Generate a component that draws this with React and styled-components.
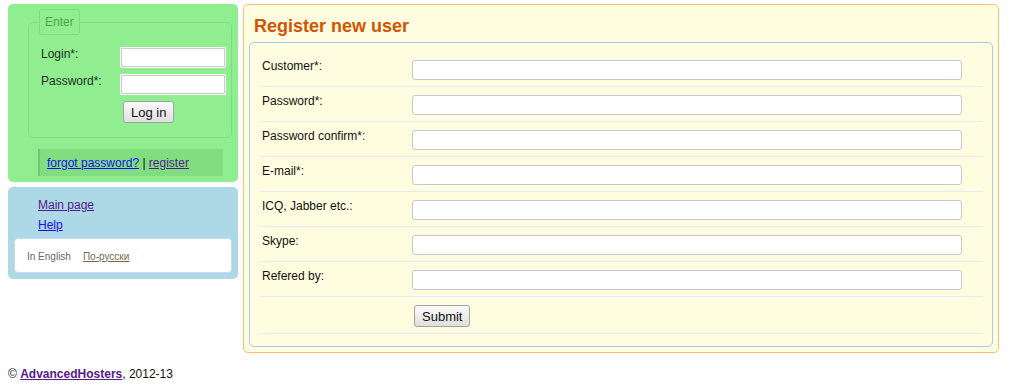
import React from 'react';
import styled, { createGlobalStyle } from 'styled-components';

const GlobalStyle = createGlobalStyle`
    body {
        margin: 0;
        background: #fff;
        font-family: "Liberation Sans", Arial, sans-serif;
        font-size: 12px;
        color: #111;
    }
`;

const fields = [
    { label: 'Customer*:', type: 'text' },
    { label: 'Password*:', type: 'password' },
    { label: 'Password confirm*:', type: 'password' },
    { label: 'E-mail*:', type: 'text' },
    { label: 'ICQ, Jabber etc.:', type: 'text' },
    { label: 'Skype:', type: 'text' },
    { label: 'Refered by:', type: 'text' },
];

const App = () => {
    return (
        <>
            <GlobalStyle />
            <Page>
                <Columns>
                    <Sidebar>
                        <LoginPanel>
                            <LoginFieldset>
                                <Legend>Enter</Legend>
                                <LoginGrid>
                                    <LoginLabel>Login*:</LoginLabel>
                                    <LoginInput type="text" />
                                    <LoginLabel>Password*:</LoginLabel>
                                    <LoginInput type="password" />
                                    <span />
                                    <Button $shift={3}>Log in</Button>
                                </LoginGrid>
                            </LoginFieldset>
                            <LinkBox>
                                <Link href="#forgot">forgot password?</Link> | <Link href="#register" $visited>register</Link>
                            </LinkBox>
                        </LoginPanel>
                        <MenuPanel>
                            <MenuLink href="#main" $visited>Main page</MenuLink>
                            <MenuLink href="#help">Help</MenuLink>
                            <LangBox>
                                <LangCurrent>In English</LangCurrent>
                                <LangLink href="#ru">По-русски</LangLink>
                            </LangBox>
                        </MenuPanel>
                    </Sidebar>
                    <Main>
                        <Title>Register new user</Title>
                        <FormBox>
                            {fields.map((f) => (
                                <FormRow key={f.label}>
                                    <FormLabel>{f.label}</FormLabel>
                                    <FormInput type={f.type} />
                                </FormRow>
                            ))}
                            <FormRow>
                                <span />
                                <Button $shift={2}>Submit</Button>
                            </FormRow>
                        </FormBox>
                    </Main>
                </Columns>
                <Footer>
                    © <Link href="#ah" $visited $bold>AdvancedHosters</Link>, 2012-13
                </Footer>
            </Page>
        </>
    );
};

const Page = styled.div`
    padding: 4px 10px 0 8px;
`;

const Columns = styled.div`
    display: flex;
    align-items: flex-start;
    gap: 5px;
`;

const Sidebar = styled.div`
    width: 230px;
    flex: none;
    display: flex;
    flex-direction: column;
    gap: 5px;
`;

const LoginPanel = styled.div`
    background: #90ee90;
    border-radius: 5px;
    padding: 5px 6px 6px 20px;
`;

const LoginFieldset = styled.fieldset`
    margin: 0;
    padding: 12px 5px 14px 12px;
    border: 1px solid #80dc80;
    border-radius: 5px;
`;

const Legend = styled.legend`
    margin-left: -2px;
    padding: 5px 5px;
    line-height: 14px;
    color: #4aa84a;
    border: 1px solid #80dc80;
    border-radius: 3px;
`;

const LoginGrid = styled.div`
    display: grid;
    grid-template-columns: 79px 106px;
    row-gap: 6px;
    align-items: start;
`;

const LoginLabel = styled.label`
    line-height: 14px;
    color: #1c2e1c;
`;

const LoginInput = styled.input`
    box-sizing: border-box;
    width: 106px;
    height: 21px;
    margin: 0;
    border: 1px solid #fff;
    box-shadow: inset 0 0 0 1px #c8ccc8;
    background: #fff;
    padding: 2px 4px;
`;

const Button = styled.button`
    justify-self: start;
    margin: 0 0 0 ${(p) => p.$shift}px;
    height: 22px;
    padding: 0 7px;
    font-family: "Liberation Sans", Arial, sans-serif;
    font-size: 13px;
    color: #111;
    background: linear-gradient(#fbfbfb, #dedede);
    border: 1px solid #a2a2a2;
    border-radius: 3px;
`;

const LinkBox = styled.div`
    margin: 11px 9px 0 10px;
    height: 27px;
    box-sizing: border-box;
    padding: 0 0 0 7px;
    display: flex;
    align-items: center;
    background: #80de80;
    border-left: 2px solid #6cc86c;
    white-space: pre;
`;

const Link = styled.a`
    color: ${(p) => (p.$visited ? '#551a8b' : '#1a0dee')};
    font-weight: ${(p) => (p.$bold ? 'bold' : 'normal')};
    text-decoration: underline;
`;

const MenuPanel = styled.div`
    background: #add8e6;
    border-radius: 5px;
    padding: 8px 6px 6px 6px;
    display: flex;
    flex-direction: column;
`;

const MenuLink = styled.a`
    align-self: flex-start;
    margin-left: 24px;
    line-height: 20px;
    color: ${(p) => (p.$visited ? '#551a8b' : '#1a0dee')};
    text-decoration: underline;
`;

const LangBox = styled.div`
    margin-top: 3px;
    height: 35px;
    box-sizing: border-box;
    background: #fff;
    border: 1px solid #c6daf4;
    border-radius: 4px;
    padding: 1px 0 0 12px;
    display: flex;
    align-items: center;
    gap: 12px;
    font-size: 10px;
`;

const LangCurrent = styled.span`
    color: #666;
`;

const LangLink = styled.a`
    color: #76684f;
    text-decoration: underline;
`;

const Main = styled.div`
    flex: 1;
    background: #fffddf;
    border: 1px solid #f8c070;
    border-radius: 5px;
    padding: 5px;
`;

const Title = styled.h1`
    margin: 3px 0 3px 5px;
    font-size: 18px;
    line-height: 26px;
    font-weight: bold;
    color: #d35400;
`;

const FormBox = styled.div`
    border: 1px solid #a8c8f0;
    border-radius: 5px;
    padding: 9px 9px 12px 10px;
`;

const FormRow = styled.div`
    display: grid;
    grid-template-columns: 150px 550px;
    align-items: start;
    padding: 8px 2px 6px;
    border-bottom: 1px solid #e2eaf6;
`;

const FormLabel = styled.label`
    line-height: 14px;
    margin-top: -1px;
`;

const FormInput = styled.input`
    box-sizing: border-box;
    width: 550px;
    height: 20px;
    margin: 0;
    padding: 2px 4px;
    background: #fff;
    border: 1px solid #c4c8d4;
    border-radius: 3px;
`;

const Footer = styled.div`
    margin-top: 14px;
    line-height: 14px;
    color: #111;
`;

export default App;
